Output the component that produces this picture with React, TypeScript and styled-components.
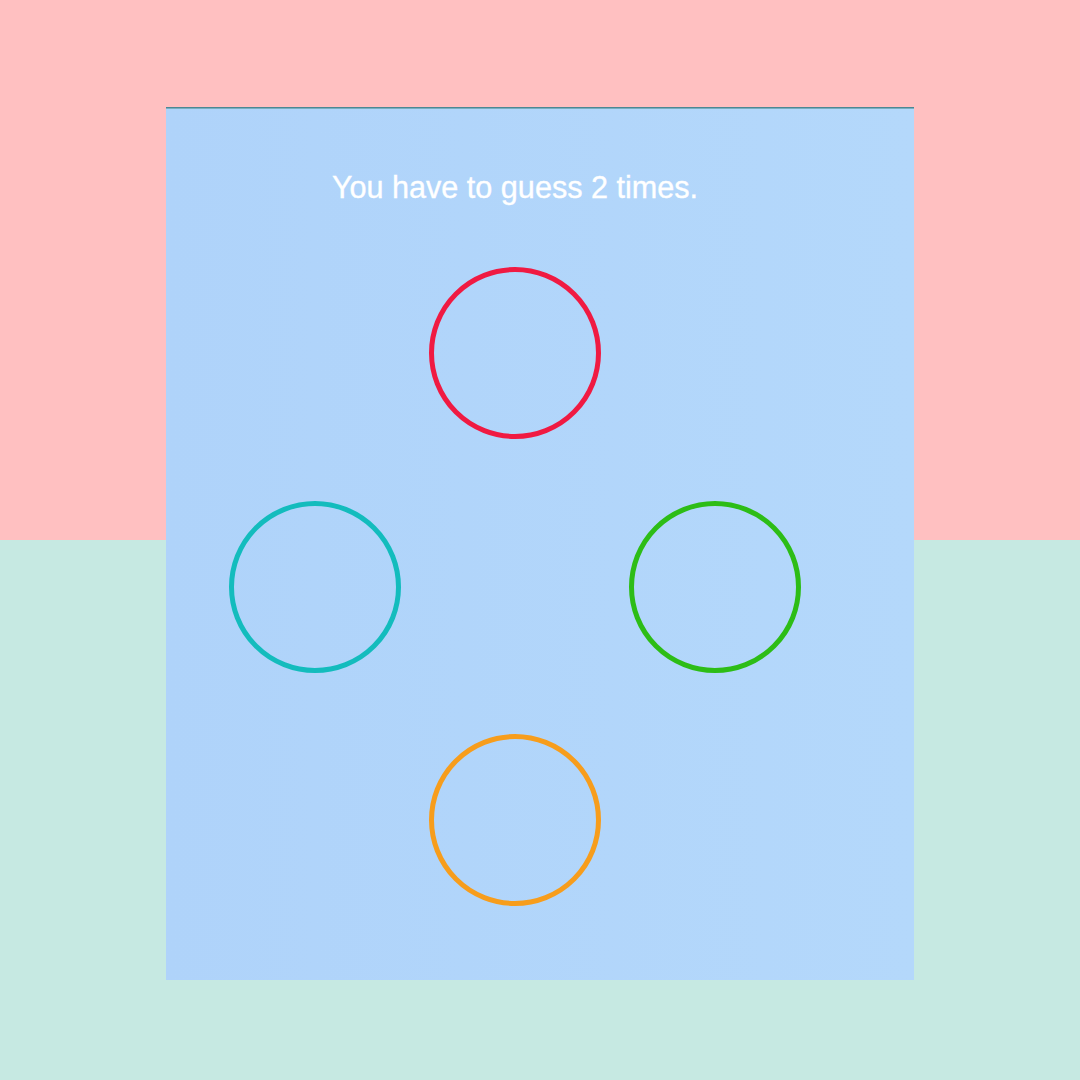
import React from "react";
import styled, { createGlobalStyle } from "styled-components";

const GlobalStyle = createGlobalStyle`
  html, body {
    margin: 0;
    padding: 0;
  }
  body {
    font-family: "Liberation Sans", Arial, sans-serif;
  }
`;

const Page = styled.div`
  width: 1080px;
  height: 1080px;
  box-sizing: border-box;
  padding: 107px 0 0 166px;
  background: linear-gradient(to bottom, #ffc0c1 0, #ffc0c1 540px, #c6e9e2 540px, #c6e9e2 100%);
  display: flex;
  align-items: flex-start;
`;

const Panel = styled.div`
  width: 748px;
  height: 873px;
  box-sizing: border-box;
  border-top: 1px solid #4c8794;
  box-shadow: inset 0 1px 0 #78aebf;
  background: linear-gradient(to right, #afd3fa, #b4d8fb);
  padding: 61px 0 0 49px;
  display: flex;
  flex-direction: column;
  align-items: flex-start;
`;

const Content = styled.div`
  width: 600px;
  display: flex;
  flex-direction: column;
  align-items: center;
  gap: 62px;
`;

const Title = styled.div`
  color: #ffffff;
  font-size: 30.6px;
  line-height: 36px;
  text-align: center;
  -webkit-text-stroke: 0.35px #ffffff;
`;

const Board = styled.div`
  display: grid;
  grid-template-columns: repeat(3, 200px);
  grid-template-rows: repeat(3, 172px);
  row-gap: 61.5px;
`;

const Circle = styled.div<{ $color: string; $row: number; $col: number }>`
  grid-row: ${(p) => p.$row};
  grid-column: ${(p) => p.$col};
  justify-self: center;
  width: 172px;
  height: 172px;
  box-sizing: border-box;
  border-radius: 50%;
  border: 5px solid ${(p) => p.$color};
`;

const circles = [
  { color: "#f01a42", row: 1, col: 2 },
  { color: "#13bcbd", row: 2, col: 1 },
  { color: "#2dbd16", row: 2, col: 3 },
  { color: "#f79d1c", row: 3, col: 2 },
];

export default function App() {
  return (
    <>
      <GlobalStyle />
      <Page>
        <Panel>
          <Content>
            <Title>You have to guess 2 times.</Title>
            <Board>
              {circles.map((c) => (
                <Circle key={c.color} $color={c.color} $row={c.row} $col={c.col} />
              ))}
            </Board>
          </Content>
        </Panel>
      </Page>
    </>
  );
}
